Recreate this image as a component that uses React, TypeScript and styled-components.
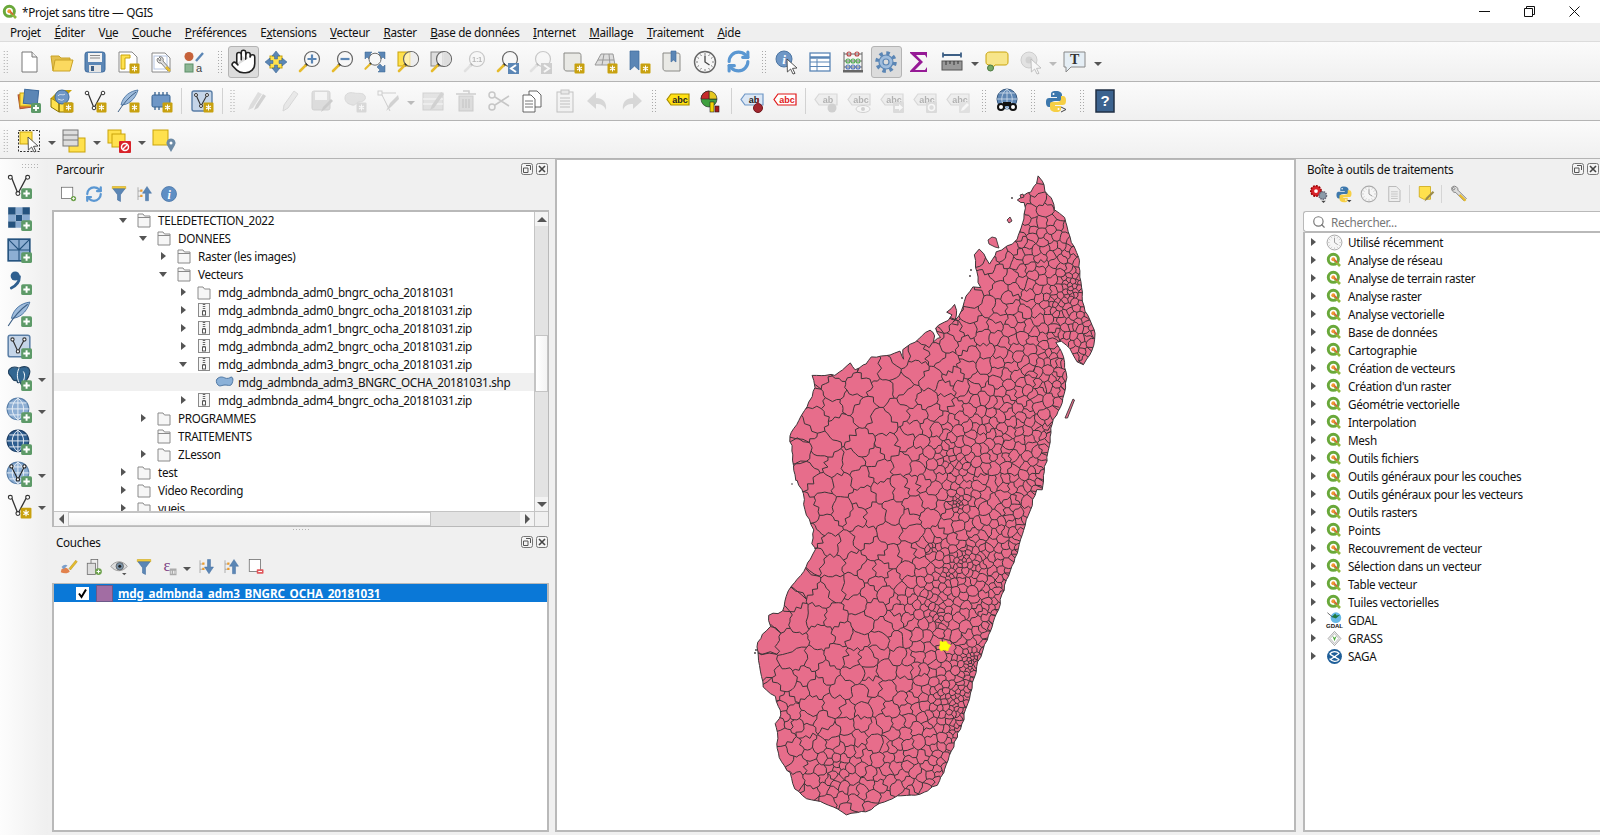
import React, { useMemo } from 'react';
import styled, { createGlobalStyle } from 'styled-components';
import { Hand, RefreshCw, Search } from 'lucide-react';

const GlobalStyle = createGlobalStyle`
  html, body {
    margin: 0;
    height: 100%;
    overflow: hidden;
    background: #f0f0f0;
    font-family: "Noto Sans", "Open Sans", sans-serif;
    font-size: 11.7px;
    color: #111;
  }
`;

/* ---------- shell ---------- */

const Page = styled.div`
  width: 1600px;
  height: 835px;
  display: flex;
  flex-direction: column;
  overflow: hidden;
  letter-spacing: -0.3px;
`;

const TitleBar = styled.div`
  height: 23px;
  background: #fff;
  display: flex;
  align-items: center;
  padding: 0 3px 0 2px;
`;

const TitleText = styled.span`
  margin-left: 4px;
  flex: 1;
`;

const WinButton = styled.div`
  width: 45px;
  height: 23px;
  display: flex;
  align-items: center;
  justify-content: center;
`;

const MenuBar = styled.div`
  height: 19px;
  background: #efefef;
  border-bottom: 1px solid #dcdcdc;
  display: flex;
  align-items: center;
  gap: 13.6px;
  padding-left: 10px;
  box-sizing: border-box;
`;

const MenuItem = styled.span``;

const ToolRow = styled.div<{ $h: number; $top?: number }>`
  height: ${p => p.$h}px;
  box-sizing: border-box;
  display: flex;
  align-items: center;
  padding-top: ${p => p.$top ?? 0}px;
  background: linear-gradient(#fbfbfb, #f0f0f0);
  border-bottom: 1px solid #b4b4b4;
`;

const Grip = styled.div<{ $w?: number }>`
  width: ${p => p.$w ?? 16}px;
  height: 24px;
  flex: none;
  background-image: radial-gradient(#a9a9a9 0.7px, transparent 0.8px);
  background-size: 3px 3px;
  background-repeat: repeat;
  background-clip: content-box;
  box-sizing: border-box;
  padding: 0 ${p => ((p.$w ?? 16) - 6) / 2}px;
`;

const Sep = styled.div`
  width: 8px;
  height: 26px;
  flex: none;
  position: relative;
  &::after {
    content: '';
    position: absolute;
    left: 3px;
    top: 0;
    bottom: 0;
    width: 1px;
    background: #d2d2d2;
  }
`;

const ToolButton = styled.div<{ $on?: boolean; $off?: boolean }>`
  width: 33px;
  height: 32px;
  flex: none;
  display: flex;
  align-items: center;
  justify-content: center;
  box-sizing: border-box;
  border-radius: 3px;
  ${p => p.$on && 'background: #dcdcdc; border: 1px solid #b4b4b4; width: 31px; margin: 0 1px;'}
  ${p => p.$off && 'filter: grayscale(1); opacity: 0.32;'}
`;

const DropArrow = styled.div<{ $w?: number; $off?: boolean }>`
  width: ${p => p.$w ?? 12}px;
  flex: none;
  height: 0;
  display: flex;
  justify-content: center;
  &::after {
    content: '';
    border-left: 4px solid transparent;
    border-right: 4px solid transparent;
    border-top: 4px solid ${p => (p.$off ? '#bbb' : '#555')};
  }
`;

const Body = styled.div`
  flex: 1;
  min-height: 0;
  display: flex;
`;

/* ---------- left icon strip ---------- */

const SideBar = styled.div`
  width: 48px;
  flex: none;
  display: flex;
  flex-direction: column;
  align-items: flex-start;
  background: linear-gradient(90deg, #fdfdfd, #efefef);
  padding: 4px 0 0 6px;
  box-sizing: border-box;
`;

const SideGrip = styled.div`
  width: 18px;
  height: 5px;
  margin: 0 0 2px 15px;
  background-image: radial-gradient(#b3b3b3 0.7px, transparent 0.8px);
  background-size: 3px 3px;
`;

const SideItem = styled.div`
  height: 32px;
  display: flex;
  align-items: center;
  gap: 5px;
`;

/* ---------- docks ---------- */

const LeftDock = styled.div`
  width: 507px;
  flex: none;
  padding: 0 6px 3px 4px;
  box-sizing: border-box;
  display: flex;
  flex-direction: column;
`;

const RightDock = styled.div`
  flex: 1;
  min-width: 0;
  padding: 0 0 3px 7px;
  display: flex;
  flex-direction: column;
`;

const Panel = styled.section<{ $h?: number }>`
  display: flex;
  flex-direction: column;
  min-height: 0;
  ${p => (p.$h ? `height: ${p.$h}px; flex: none;` : 'flex: 1;')}
`;

const PanelHead = styled.header`
  height: 22px;
  box-sizing: border-box;
  display: flex;
  align-items: center;
  padding: 0 1px 2px 4px;
  flex: none;
`;

const PanelTitle = styled.span`
  flex: 1;
`;

const DockButton = styled.svg`
  width: 12px;
  height: 12px;
  margin-left: 3px;
  display: block;
`;

const PanelBar = styled.div<{ $pad?: number }>`
  height: 26px;
  flex: none;
  display: flex;
  align-items: center;
  padding-left: ${p => p.$pad ?? 4}px;
  margin-bottom: 3px;
`;

const PanelTool = styled.div`
  width: 25px;
  flex: none;
  display: flex;
  justify-content: center;
`;

const PanelSep = styled.div`
  width: 7px;
  height: 18px;
  flex: none;
  position: relative;
  &::after {
    content: '';
    position: absolute;
    left: 3px;
    top: 0;
    bottom: 0;
    width: 1px;
    background: #d5d5d5;
  }
`;

const Splitter = styled.div`
  height: 5px;
  flex: none;
  display: flex;
  justify-content: center;
  align-items: center;
  &::after {
    content: '';
    width: 18px;
    height: 3px;
    background-image: radial-gradient(#b3b3b3 0.7px, transparent 0.8px);
    background-size: 3px 3px;
  }
`;

const TreeBox = styled.div`
  flex: 1;
  min-height: 0;
  display: grid;
  grid-template-columns: 1fr 14px;
  grid-template-rows: 1fr 15px;
  background: #fff;
  border: 2px solid #b9b9b9;
  border-right-width: 1px;
  border-bottom-width: 1px;
  overflow: hidden;
`;

const TreeList = styled.div`
  overflow: hidden;
  min-height: 0;
  padding-bottom: 1px;
  & > :first-child {
    margin-top: -1px;
  }
`;

const PlainBox = styled.div<{ $open?: boolean }>`
  flex: 1;
  min-height: 0;
  background: #fff;
  border: 2px solid #b9b9b9;
  border-top-width: 1px;
  overflow: hidden;
  ${p => p.$open && 'border-right-width: 0;'}
`;

const Row = styled.div<{ $pad: number; $hi?: boolean }>`
  height: 18px;
  display: flex;
  align-items: center;
  padding-left: ${p => p.$pad}px;
  white-space: nowrap;
  ${p => p.$hi && 'background: #f0f0f0;'}
`;

const Twist = styled.span<{ $state?: 'open' | 'closed' }>`
  width: 12px;
  margin-right: 7px;
  flex: none;
  display: flex;
  justify-content: center;
  &::after {
    content: '';
    ${p =>
      p.$state === 'open' &&
      'border-left: 4.5px solid transparent; border-right: 4.5px solid transparent; border-top: 5px solid #555;'}
    ${p =>
      p.$state === 'closed' &&
      'border-top: 4.5px solid transparent; border-bottom: 4.5px solid transparent; border-left: 5px solid #555;'}
  }
`;

const RowIcon = styled.span`
  width: 16px;
  height: 16px;
  margin-right: 6px;
  flex: none;
  display: flex;
  align-items: center;
  justify-content: center;
`;

const LayerRow = styled.div`
  height: 18px;
  background: #0a78d7;
  display: flex;
  align-items: center;
  padding-left: 22px;
  color: #fff;
  font-weight: 700;
  letter-spacing: -0.1px;
  text-decoration: underline;
`;

const LayerCheck = styled.span`
  width: 13px;
  height: 13px;
  background: #fff;
  color: #000;
  display: flex;
  align-items: center;
  justify-content: center;
  margin-right: 7px;
`;

const LayerSwatch = styled.span`
  width: 15px;
  height: 15px;
  background: #a26da3;
  border: 1px solid #6a5a8a;
  margin-right: 5px;
`;

/* ---------- scrollbars ---------- */

const VBar = styled.div`
  display: flex;
  flex-direction: column;
  border-left: 1px solid #c4c4c4;
  background: #e3e3e3;
  min-height: 0;
`;

const HBar = styled.div`
  display: flex;
  background: #e3e3e3;
  border-top: 1px solid #c4c4c4;
`;

const ScrollBtn = styled.div<{ $size: number; $horizontal?: boolean }>`
  flex: none;
  ${p => (p.$horizontal ? 'width' : 'height')}: ${p => p.$size}px;
  background: #f3f3f3;
  display: flex;
  align-items: center;
  justify-content: center;
`;

const ScrollSpace = styled.div<{ $size?: number; $thumb?: boolean; $horizontal?: boolean }>`
  ${p => (p.$size ? `flex: none; ${p.$horizontal ? 'width' : 'height'}: ${p.$size}px;` : 'flex: 1;')}
  ${p =>
    p.$thumb &&
    `background: linear-gradient(${p.$horizontal ? '180deg' : '90deg'}, #fff, #f4f4f4);
     border: 1px solid #c4c4c4;
     box-sizing: border-box;`}
`;

const Corner = styled.div`
  background: #f0f0f0;
  border-top: 1px solid #c4c4c4;
  border-left: 1px solid #c4c4c4;
`;

const MiniArrow = styled.span<{ $dir: 'up' | 'down' | 'left' | 'right' }>`
  width: 0;
  height: 0;
  ${p => p.$dir === 'up' && 'border-left: 5px solid transparent; border-right: 5px solid transparent; border-bottom: 5px solid #555;'}
  ${p => p.$dir === 'down' && 'border-left: 5px solid transparent; border-right: 5px solid transparent; border-top: 5px solid #555;'}
  ${p => p.$dir === 'left' && 'border-top: 5px solid transparent; border-bottom: 5px solid transparent; border-right: 5px solid #555;'}
  ${p => p.$dir === 'right' && 'border-top: 5px solid transparent; border-bottom: 5px solid transparent; border-left: 5px solid #555;'}
`;

/* ---------- canvas & search ---------- */

const Canvas = styled.main`
  width: 741px;
  flex: none;
  background: #fff;
  border: 2px solid #b9b9b9;
  border-top-width: 1px;
  box-sizing: border-box;
  margin-bottom: 3px;
  overflow: hidden;
`;

const MapSvg = styled.svg`
  display: block;
`;

const SearchBox = styled.div`
  height: 21px;
  margin-top: 1px;
  flex: none;
  background: #fff;
  border: 1px solid #b9b9b9;
  border-right: none;
  border-radius: 3px 0 0 3px;
  box-sizing: border-box;
  display: flex;
  align-items: center;
  padding-left: 8px;
  gap: 5px;
  color: #777;
`;

/* ---------- icons ---------- */

const B = '#5b86b5';
const BL = '#9fbcdc';
const Y = '#ffe14d';
const YB = '#c9a30a';

const Star = () => (
  <g>
    <rect x="13.5" y="13.5" width="10" height="10" rx="1" fill="#c8a10f" />
    <path d="M18.5 15.500v6M16 17l5 3M21 17l-5 3" stroke="#fff" strokeWidth="1.1" />
  </g>
);

const PlusBadge = () => (
  <g>
    <rect x="14" y="14" width="10" height="10" rx="1.5" fill="#5d9a68" />
    <path d="M19 16v6M16 19h6" stroke="#fff" strokeWidth="1.8" />
  </g>
);

const Vee = () => (
  <g>
    <path d="M5 4l6 15 8-15" fill="none" stroke="#333" strokeWidth="1.2" />
    <circle cx="4" cy="4" r="1.8" fill="#fff" stroke="#333" />
    <circle cx="11" cy="19" r="1.8" fill="#fff" stroke="#333" />
    <circle cx="20" cy="4" r="1.8" fill="#fff" stroke="#333" />
  </g>
);

const Feather = () => (
  <g>
    <path d="M22 1C14 2 7 7 5 16c7 0 14-5 17-15z" fill={BL} stroke="#4d76a3" strokeWidth="0.9" />
    <path d="M2 23C7 15 13 8 20 3" fill="none" stroke="#3d5f85" strokeWidth="1" />
  </g>
);

const VirtualBox = () => (
  <g>
    <rect x="2" y="2" width="20" height="20" rx="2" fill="#c5d5e8" stroke="#5a7ea6" strokeWidth="1.4" />
    <path d="M6 6l5 11 6-11" fill="none" stroke="#333" strokeWidth="1.1" />
    <circle cx="6" cy="6" r="1.5" fill="#fff" stroke="#333" />
    <circle cx="11" cy="17" r="1.5" fill="#fff" stroke="#333" />
    <circle cx="17" cy="6" r="1.5" fill="#fff" stroke="#333" />
  </g>
);

const Globe = ({ dark }: { dark?: boolean }) => (
  <g>
    <circle cx="11" cy="11" r="10" fill={dark ? '#2d5d8f' : '#8daed3'} stroke={dark ? '#1d3f66' : '#5a80aa'} />
    <path d="M1 11h20M11 1v20M3 5.500h16M3 16.500h16M11 1c-7 5-7 15 0 20M11 1c7 5 7 15 0 20" fill="none" stroke={dark ? '#e8eef5' : '#e6eef6'} strokeWidth="0.9" />
  </g>
);

const Loupe = ({ children }: { children?: React.ReactNode }) => (
  <g>
    <circle cx="15" cy="9" r="7.5" fill="#f7f7f7" stroke="#666" strokeWidth="1.2" />
    {children}
    <path d="M10 14l-1.6 1.6" stroke="#222" strokeWidth="2.6" />
    <path d="M8.4 15.6L3 21" stroke="#e6bb2c" strokeWidth="2.6" strokeLinecap="round" />
  </g>
);

const Cursor = ({ dx = 0, dy = 0 }: { dx?: number; dy?: number }) => (
  <path transform={`translate(${dx} ${dy})`} d="M12 9l10 9-4.500.4 2.500 5-2 .6-2.400-5-3.200 3z" fill="#fff" stroke="#444" strokeWidth="0.9" />
);

const Scroll = () => <path d="M3 3h15c2 0 2 2 2 4v14H6c-2 0-3-1-3-3z" fill="#e9e9e5" stroke="#8a8a86" />;

const Bookmark = ({ x = 6 }: { x?: number }) => <path transform={`translate(${x} 1)`} d="M0 0h9v19l-4.500-4L0 19z" fill={B} stroke="#3d6a9c" strokeWidth="0.7" />;

const LabelTag = ({ fill, stroke, color = '#222', text = 'abc' }: { fill: string; stroke: string; color?: string; text?: string }) => (
  <g>
    <path d="M5 5h18v11H5l-4-5.500z" fill={fill} stroke={stroke} strokeWidth="1.2" />
    <text x="14" y="14" fontFamily="Liberation Sans" fontWeight="700" fontSize="9" textAnchor="middle" letterSpacing="0" fill={color}>{text}</text>
  </g>
);

const Funnel = () => (
  <g>
    <path d="M3 2h18v3H3z" fill="#f1c93a" stroke="#c9a30a" strokeWidth="0.7" />
    <path d="M4 5h16l-6 8v9l-4-2v-7z" fill={B} stroke="#3d6a9c" strokeWidth="0.7" />
  </g>
);

const MiniTree = ({ down }: { down?: boolean }) => (
  <g>
    <path d="M4 3v17M4 8h4M4 15h4" stroke="#999" fill="none" />
    <rect x="7" y="6" width="3" height="3" fill="#eb9b2d" />
    <rect x="7" y="13" width="3" height="3" fill="#eb9b2d" />
    <path d={down ? 'M14 2h4v10h4l-6 9-6-9h4z' : 'M14 21h4V11h4l-6-9-6 9h4z'} fill={B} stroke="#3d6a9c" strokeWidth="0.6" />
  </g>
);

const Python = () => (
  <g>
    <path d="M12 2C7 2 7 4 7 6v2h6v1H5C2 9 2 12 2 14s1 4 3 4h2v-3c0-2 2-3 4-3h5c2 0 2-1 2-3V6c0-2-2-4-6-4z" fill="#3d78ad" />
    <path d="M12 23c5 0 5-2 5-4v-2h-6v-1h8c3 0 3-3 3-5s-1-4-3-4h-2v3c0 2-2 3-4 3H8c-2 0-2 1-2 3v3c0 2 2 4 6 4z" fill="#f6cf45" />
    <circle cx="9.500" cy="5" r="1" fill="#fff" />
    <circle cx="14.500" cy="20" r="1" fill="#fff" />
  </g>
);

const QLogo = () => (
  <g>
    <circle cx="11" cy="11" r="7.6" fill="#fff" stroke="#69a83a" strokeWidth="4.4" />
    <path d="M13 13l8 8" stroke="#8fb93c" strokeWidth="4" />
    <circle cx="11" cy="11" r="3" fill="#ee9b33" />
    <path d="M12 11l5 5" stroke="#e8463a" strokeWidth="1.6" />
  </g>
);

const ClockFace = ({ ring, hand }: { ring: string; hand: string }) => (
  <g>
    <circle cx="12" cy="12" r="10.500" fill="#f6f6f6" stroke={ring} strokeWidth="1.400" />
    <path d="M12 3v2M12 19v2M3 12h2M19 12h2M7.500 4.500l1 1.500M16.500 4.500l-1 1.500M4.500 7.500l1.500 1M4.500 16.500l1.500-1M19.500 7.500l-1.500 1M19.500 16.500l-1.500-1M7.500 19.500l1-1.500M16.500 19.500l-1-1.500" stroke={ring} strokeWidth="0.800" />
    <path d="M12 5.500V12l4.500 3" fill="none" stroke={hand} strokeWidth="1.300" />
  </g>
);

const page = 'M5 2h10l5 5v15H5z';

const ICONS: Record<string, React.ReactNode> = {
  qgis: <QLogo />,
  new: <g><path d={page} fill="#fff" stroke="#777" /><path d="M15 2v5h5" fill="#eee" stroke="#777" /></g>,
  open: <g><path d="M3 21L1 6h8l2 2h9v3" fill="#e4c04e" stroke="#c9a227" /><path d="M3 21l2-11h18l-3 11z" fill="#fbd95f" stroke="#c9a227" /></g>,
  save: <g><rect x="2" y="2" width="20" height="20" rx="2.500" fill="#5b86b5" stroke="#3d6a9c" /><rect x="5" y="3" width="14" height="9" fill="#f2f2f2" /><path d="M7 5.500h10M7 8h10" stroke="#888" /><rect x="6" y="15" width="12" height="7" fill="#e4e4e4" /><rect x="8" y="16" width="3" height="5" fill="#3d5f85" /></g>,
  saveas: <g><path d="M3 2h13l5 5v15H3z" fill="#fff" stroke="#888" /><path d="M5 5h9v3H9v11H5z" fill={Y} stroke={YB} /><Star /></g>,
  layouts: <g><path d="M3 3h13l5 5v14H3z" fill="#fff" stroke="#888" /><rect x="5" y="6" width="13" height="13" fill="#fff" stroke="#b6c6e4" /><path d="M9 8a3 3 0 0 0 3 5l7 8 2-2-7-8a3 3 0 0 0-4-4l2 2-1 2z" fill="#ddd" stroke="#666" strokeWidth="0.8" /><path d="M17 17l4 4" stroke="#e6bb2c" strokeWidth="2.500" /></g>,
  style: <g><circle cx="7" cy="6.500" r="4.500" fill="#c6623a" /><rect x="3" y="14" width="8" height="8" fill="#8cb694" stroke="#5c8f68" /><path d="M14 11l7-8" stroke={B} strokeWidth="2.400" /><text x="14" y="22" fontFamily="Liberation Sans" fontSize="11" fill="#444">a</text></g>,
  pan: <g><rect x="6" y="6" width="12" height="12" fill={Y} stroke={YB} /><path d="M12 1l4 5h-2.500v3h-3V6H8zM12 23l-4-5h2.500v-3h3v3H16zM1 12l5-4v2.500h3v3H6V16zM23 12l-5 4v-2.500h-3v-3h3V8z" fill={B} stroke="#34608f" strokeWidth="0.5" /></g>,
  zoomin: <Loupe><path d="M15 4.500v9M10.500 9h9" stroke={B} strokeWidth="2.200" /></Loupe>,
  zoomout: <Loupe><path d="M10.500 9h9" stroke={B} strokeWidth="2.200" /></Loupe>,
  zoomfull: <g><path d="M2 2h7L7 4l3 3-3 3-3-3-2 2zM22 2v7l-2-2-3 3-3-3 3-3-2-2zM22 22h-7l2-2-3-3 3-3 3 3 2-2z" fill={B} stroke="#34608f" strokeWidth="0.5" /><g transform="translate(0 2) scale(0.8)"><Loupe /></g></g>,
  zoomsel: <g><rect x="2" y="2" width="12" height="14" fill={Y} stroke={YB} /><circle cx="15" cy="9" r="7.500" fill="#fff" fillOpacity="0.55" stroke="#666" strokeWidth="1.200" /><path d="M15 2v14a7 7 0 0 0 0-14z" fill="#eee" /><path d="M10 14l-1.600 1.600" stroke="#222" strokeWidth="2.600" /><path d="M8.400 15.600L3 21" stroke="#e6bb2c" strokeWidth="2.600" strokeLinecap="round" /></g>,
  zoomlayer: <g><rect x="2" y="2" width="12" height="14" fill="#ddd" stroke="#888" /><circle cx="15" cy="9" r="7.500" fill="#fff" fillOpacity="0.55" stroke="#666" strokeWidth="1.200" /><path d="M15 2v14a7 7 0 0 0 0-14z" fill="#ddd" /><path d="M10 14l-1.600 1.600" stroke="#222" strokeWidth="2.600" /><path d="M8.400 15.600L3 21" stroke="#e6bb2c" strokeWidth="2.600" strokeLinecap="round" /></g>,
  one: <Loupe><text x="15" y="12" fontFamily="Liberation Sans" fontWeight="700" fontSize="7.500" textAnchor="middle" fill="#333">1:1</text></Loupe>,
  last: <g><Loupe /><rect x="13" y="13" width="11" height="11" fill={B} /><path d="M21 15l-5 3.500 5 3.500" fill="none" stroke="#fff" strokeWidth="2" /></g>,
  next: <g><Loupe /><rect x="13" y="13" width="11" height="11" fill={B} /><path d="M16 15l5 3.500-5 3.500" fill="none" stroke="#fff" strokeWidth="2" /></g>,
  newmap: <g><Scroll /><Star /></g>,
  new3d: <g><path d="M1 15L7 4h12l2 11z" fill="#ddd" stroke="#999" /><path d="M4 10h16M10 4l-2 11M15 4l1 11" stroke="#999" /><Star /></g>,
  newmark: <g><Bookmark x={3} /><Star /></g>,
  marks: <g><Scroll /><path d="M11 1h5v11l-2.500-2-2.500 2z" fill={B} stroke="#3d6a9c" strokeWidth="0.6" /></g>,
  clock: <ClockFace ring="#666" hand="#444" />,
  clockLight: <ClockFace ring="#aaa" hand="#999" />,
  gear: <g><circle cx="12" cy="12" r="8.500" fill="none" stroke={B} strokeWidth="4.500" strokeDasharray="3.300 3.380" /><circle cx="12" cy="12" r="7" fill={BL} stroke={B} strokeWidth="1.200" /><circle cx="12" cy="12" r="3" fill="#dcdcdc" stroke={B} strokeWidth="1.200" /></g>,
  identify: <g><circle cx="9" cy="9" r="8" fill="#6f97c6" stroke="#4d76a3" /><text x="9" y="14" fontFamily="Liberation Serif" fontWeight="700" fontStyle="italic" fontSize="13" textAnchor="middle" fill="#fff">i</text><Cursor /></g>,
  table: <g><rect x="2" y="3" width="20" height="18" fill="#fff" stroke={B} strokeWidth="1.300" /><path d="M2 7.500h20" stroke={B} strokeWidth="2.500" /><path d="M9 9v12M2 12h20M2 16.500h20" stroke={B} /></g>,
  abacus: <g><path d="M3 2v18M21 2v18M3 4h18M3 11h18M3 17h18" stroke="#666" fill="none" /><rect x="2" y="20" width="20" height="2.500" fill="#666" /><g fill="none" strokeWidth="1.100"><circle cx="8" cy="4" r="2" stroke="#b44" /><circle cx="16" cy="4" r="2" stroke="#b44" /><circle cx="7" cy="11" r="2" stroke="#5a5" /><circle cx="12" cy="11" r="2" stroke="#5a5" /><circle cx="17" cy="11" r="2" stroke="#5a5" /><circle cx="7" cy="17" r="2" stroke="#57b" /><circle cx="12" cy="17" r="2" stroke="#57b" /><circle cx="17" cy="17" r="2" stroke="#57b" /></g></g>,
  sigma: <path d="M3 2h17v6l-2-3H9l7 7-8 8h10l2-3v5H3v-1l9-9.500L3 3z" fill="#961a96" />,
  measure: <g><path d="M3 5h18M3 2.500v5M21 2.500v5" stroke="#3d5f85" strokeWidth="1.800" fill="none" /><rect x="2" y="11" width="20" height="9" fill="#999" stroke="#555" /><path d="M6 11v4M10 11v3M14 11v4M18 11v3" stroke="#333" /></g>,
  tip: <g><path d="M5 2h15c2 0 3 1 3 3v7c0 2-1 3-3 3H10l-5 6v-6c-3 0-4-1-4-3V5c0-2 2-3 4-3z" fill="#f7e58a" stroke="#c9a30a" /><circle cx="5.500" cy="18" r="3" fill="#76a866" stroke="#4c7a42" /></g>,
  action: <g><circle cx="11" cy="10" r="8" fill="#bbb" stroke="#777" /><circle cx="11" cy="10" r="3.500" fill="#888" /><Cursor dx={1} /></g>,
  annot: <g><path d="M1 2h21v15H8l-5 5v-5H1z" fill="#e5eef5" stroke="#888" /><text x="11.500" y="14" fontFamily="Liberation Serif" fontWeight="700" fontSize="14" textAnchor="middle" fill="#333">T</text></g>,
  dsm: <g><rect x="2" y="5" width="12" height="14" fill="#e16d3c" stroke="#a8502b" transform="rotate(-8 8 12)" /><rect x="3" y="4" width="12" height="13" fill={Y} stroke={YB} /><rect x="7" y="1" width="14" height="14" fill={B} stroke="#3d6a9c" transform="rotate(6 14 8)" /><PlusBadge /></g>,
  gpkg: <g><path d="M1 9l8 5v9l-8-5zM9 14h13v9H9z" fill={Y} stroke="#8a7300" /><path d="M1 9l8-8h13L9 14z" fill="#c9a30a" /><circle cx="12" cy="8" r="7" fill="#6f97c6" stroke="#3d6a9c" /><path d="M8 7c2-3 5 0 7-2M8 10c3 1 4 2 6 0" stroke="#dde8f2" fill="none" /><Star /></g>,
  shape: <g><Vee /><Star /></g>,
  scratch: <g><Feather /><Star /></g>,
  mesh: <g><rect x="3" y="6" width="18" height="12" rx="1.500" fill="#6f97c6" stroke="#34608f" /><path d="M6 3v3M10 3v3M14 3v3M18 3v3M6 18v3M10 18v3" stroke="#34608f" strokeWidth="1.300" /><Star /></g>,
  virtual: <g><VirtualBox /><Star /></g>,
  editmany: <g><path d="M4 21l2-5 8-13 4 2-9 14z" fill="#aaa" /><path d="M10 21l2-5 7-11 3 2-8 12z" fill="#888" /></g>,
  pencil: <path d="M6 22l1-6L17 2l4 3-10 14z" fill="#ccc" stroke="#999" />,
  saveedit: <g><rect x="2" y="2" width="18" height="19" rx="2" fill="#aaa" stroke="#888" /><rect x="5" y="3" width="12" height="8" fill="#eee" /><path d="M11 23l2-5 8-8 2 2-8 8z" fill="#777" /></g>,
  addpoly: <g><path d="M2 9c0-5 5-6 9-5s9-1 11 3-3 6-6 6-3 4-7 3-7-3-7-7z" fill="#bbb" stroke="#999" /><Star /></g>,
  digitize: <g><rect x="2" y="2" width="4" height="4" fill="none" stroke="#777" /><path d="M6 6l8 16M6 4h14" stroke="#777" /><path d="M10 22l4-8 8-8 1 4-8 8z" fill="#888" /></g>,
  edittable: <g><rect x="2" y="4" width="20" height="17" fill="#bbb" stroke="#888" /><path d="M2 10h20M2 15h20" stroke="#fff" /><path d="M9 21l2-5 9-13 3 2-10 14z" fill="#888" /></g>,
  trash: <g><rect x="5" y="7" width="14" height="15" fill="#aaa" stroke="#777" /><path d="M2 5h20M9 2h6v3M9 10v9M12 10v9M15 10v9" stroke="#777" fill="none" strokeWidth="1.500" /></g>,
  scissors: <g><circle cx="5" cy="6" r="3" fill="none" stroke="#666" strokeWidth="1.500" /><circle cx="5" cy="18" r="3" fill="none" stroke="#666" strokeWidth="1.500" /><path d="M8 8l14 9M8 16l14-9" stroke="#666" strokeWidth="1.500" /></g>,
  copy: <g><path d="M9 2h8l4 4v12H9z" fill="#fff" stroke="#555" strokeWidth="0.9" /><path d="M3 6h8l4 4v13H3z" fill="#fff" stroke="#555" strokeWidth="0.9" /><path d="M5 12h8M5 15h8M5 18h8" stroke="#666" strokeWidth="0.9" /></g>,
  paste: <g><rect x="4" y="3" width="16" height="20" fill="#eee" stroke="#555" /><rect x="8" y="1" width="8" height="4" fill="#ccc" stroke="#555" /><path d="M7 9h10M7 12h10M7 15h10M7 18h10" stroke="#555" /></g>,
  undo: <path d="M10 3L1 12l9 8v-5c5 0 8 1 10 6 1-7-2-12-10-12z" fill="#999" />,
  redo: <path d="M14 3l9 9-9 8v-5c-5 0-8 1-10 6-1-7 2-12 10-12z" fill="#999" />,
  labelY: <LabelTag fill="#ffe014" stroke="#a98d00" />,
  chart: <g><path d="M10 2a8 8 0 1 0 8 8h-8z" fill="#3fa03f" stroke="#222" strokeWidth="0.600" /><path d="M10 2a8 8 0 0 1 8 8h-8z" fill="#e6c81e" stroke="#222" strokeWidth="0.600" /><path d="M2 10a8 8 0 0 1 8-8v8z" fill="#c62a2a" stroke="#222" strokeWidth="0.600" /><rect x="11" y="13" width="4" height="10" fill="#f2d500" stroke="#222" strokeWidth="0.600" /><rect x="16" y="17" width="4" height="6" fill="#a91a1a" stroke="#222" strokeWidth="0.600" /></g>,
  labelPin: <g><LabelTag fill="#dbe7f5" stroke="#6f97c6" text="ab" /><circle cx="18" cy="19" r="4.500" fill="#a3272f" stroke="#70181d" /><path d="M18 9v6" stroke="#a3272f" strokeWidth="1.500" /></g>,
  labelR: <LabelTag fill="#fff" stroke="#e01818" color="#e01818" />,
  ghost1: <g><LabelTag fill="#ddd" stroke="#999" text="ab" /><circle cx="18" cy="19" r="4.500" fill="#888" /></g>,
  ghost2: <g><LabelTag fill="#ddd" stroke="#999" /><ellipse cx="16" cy="20" rx="7" ry="3.500" fill="#fff" stroke="#888" /><circle cx="16" cy="20" r="2" fill="#888" /></g>,
  ghost3: <g><LabelTag fill="#ddd" stroke="#999" /><rect x="13" y="13" width="11" height="11" rx="1" fill="#aaa" /><path d="M15 17h4v-2l4 3.500-4 3.500v-2h-4z" fill="#fff" /></g>,
  ghost4: <g><LabelTag fill="#ddd" stroke="#999" /><rect x="13" y="13" width="11" height="11" rx="1" fill="#aaa" /><circle cx="18.500" cy="18.500" r="3" fill="none" stroke="#fff" strokeWidth="1.500" /></g>,
  ghost5: <g><LabelTag fill="#ddd" stroke="#999" /><rect x="13" y="13" width="11" height="11" rx="1" fill="#bbb" /><path d="M15 22l1-3 5-5 2 2-5 5z" fill="#fff" /></g>,
  binoc: <g><circle cx="12" cy="10" r="10" fill="#5e86b3" stroke="#35587f" /><path d="M2 10h20M12 0v20M4 4h16M4 16h16M12 0c-7 5-7 15 0 20M12 0c7 5 7 15 0 20" fill="none" stroke="#d5e1ee" strokeWidth="0.800" /><circle cx="6" cy="18" r="4" fill="#111" /><circle cx="18" cy="18" r="4" fill="#111" /><circle cx="6" cy="18" r="2" fill="#fff" /><circle cx="18" cy="18" r="2" fill="#fff" /><rect x="8" y="13" width="8" height="4" fill="#111" /></g>,
  python: <g><Python /><path d="M17 18l5 2.500-5 2.500" fill="none" stroke="#444" /></g>,
  help: <g><rect x="3" y="1" width="18" height="22" fill="#3c638f" stroke="#1f2f44" strokeWidth="1.500" /><text x="12" y="17" fontFamily="Liberation Sans" fontWeight="700" fontSize="15" textAnchor="middle" fill="#fff">?</text></g>,
  select: <g><rect x="1.500" y="1.500" width="21" height="21" fill="none" stroke="#333" strokeDasharray="2 1.500" /><rect x="3" y="3" width="12" height="12" fill={Y} stroke={YB} /><Cursor dx={-1} dy={-1} /></g>,
  attrsel: <g><rect x="7" y="9" width="16" height="14" fill={Y} stroke={YB} /><rect x="1" y="1" width="15" height="16" fill="#ddd" stroke="#777" /><path d="M1 6h15M1 11h15" stroke="#777" /></g>,
  unsel: <g><rect x="1" y="1" width="13" height="13" fill={Y} stroke={YB} /><rect x="5" y="5" width="13" height="13" fill={Y} stroke={YB} /><rect x="12" y="12" width="12" height="12" rx="1" fill="#d8232a" /><circle cx="18" cy="18" r="3.500" fill="none" stroke="#fff" strokeWidth="1.500" /><path d="M15.500 20.500l5-5" stroke="#fff" strokeWidth="1.500" /></g>,
  selloc: <g><rect x="1" y="1" width="15" height="15" fill={Y} stroke={YB} /><path d="M19 23l-4-7a4.500 4.500 0 1 1 8 0z" fill="#6c8aa5" /><circle cx="19" cy="14" r="1.500" fill="#fff" /></g>,
  vadd: <g><Vee /><PlusBadge /></g>,
  raster: <g><path d="M2 2h7v7H2zM15 2h7v7h-7zM9 9h6v6H9zM2 15h7v6H2z" fill="#24527e" /><path d="M9 2h6v7H9zM2 9h7v6H2zM15 9h7v6h-7zM9 15h6v6H9z" fill="#88aad0" /><PlusBadge /></g>,
  meshadd: <g><rect x="2" y="2" width="20" height="20" fill="#8daed3" stroke="#24527e" strokeWidth="1.500" /><path d="M2 12h20M12 2v20M2 2l10 10M12 12l10-10" stroke="#24527e" /><PlusBadge /></g>,
  comma: <g><circle cx="8.500" cy="6.500" r="4.200" fill="#2f5f8f" /><path d="M12.400 7c0 5-3 8.500-7.500 10.500" fill="none" stroke="#2f5f8f" strokeWidth="2.600" strokeLinecap="round" /><PlusBadge /></g>,
  featheradd: <g><Feather /><PlusBadge /></g>,
  virtualadd: <g><VirtualBox /><PlusBadge /></g>,
  pg: <g><path d="M3 4c3-3 7-2 9-1 3-2 7-2 9 0 2 3 0 8-2 11-1 2-1 5-3 6-2 0-2-3-3-4-2 1-3 0-3-2-2 1-4 0-5-3C3 9 1 7 3 4z" fill="#336791" stroke="#1f3f5c" /><path d="M12 3c-2 4-2 9 0 13M16 6c2 3 1 6 0 9" stroke="#fff" strokeWidth="0.900" fill="none" /><PlusBadge /></g>,
  wms: <g><Globe /><PlusBadge /></g>,
  wcs: <g><Globe dark /><PlusBadge /></g>,
  wfs: <g><Globe /><path d="M5 5l6 12 6-12" stroke="#222" fill="none" /><circle cx="5" cy="5" r="1.500" fill="#fff" stroke="#222" /><circle cx="11" cy="17" r="1.500" fill="#fff" stroke="#222" /><circle cx="17" cy="5" r="1.500" fill="#fff" stroke="#222" /><PlusBadge /></g>,
  vstar: <g><Vee /><Star /></g>,
  selfeat: <g><rect x="2" y="3" width="15" height="15" fill="#fff" stroke="#666" /><circle cx="18" cy="18" r="3.500" fill="#6fa34f" /><path d="M18 16v4M16 18h4" stroke="#fff" /></g>,
  filter: <Funnel />,
  collapse: <MiniTree />,
  expand: <MiniTree down />,
  info: <g><circle cx="12" cy="12" r="10" fill="#5f8fc4" stroke="#4470a3" /><text x="12" y="18" fontFamily="Liberation Serif" fontWeight="700" fontStyle="italic" fontSize="16" textAnchor="middle" fill="#fff">i</text></g>,
  brush: <g><path d="M12 14l9-11 2 2-9 11z" fill="#e6bb2c" stroke="#a8860a" strokeWidth="0.600" /><path d="M2 15c4-4 9-2 11 3-2 3-8 3-12 1z" fill="#e2824d" /><path d="M2 12c3-3 5-4 8-2l-5 5z" fill="#7ca0cb" /></g>,
  addgroup: <g><rect x="8" y="2" width="9" height="18" fill="#eee" stroke="#666" /><rect x="3" y="7" width="11" height="15" fill="#ddd" stroke="#666" /><circle cx="18" cy="18" r="4.500" fill="#6fa34f" /><path d="M18 15.500v5M15.500 18h5" stroke="#fff" strokeWidth="1.300" /></g>,
  eye: <g><path d="M1 11c6-8 16-8 22 0-6 8-16 8-22 0z" fill="#ddd" stroke="#888" /><circle cx="13" cy="11" r="5" fill="#7b93a8" stroke="#555" /><circle cx="13" cy="11" r="2" fill="#222" /><path d="M16 20l3 3 3-3z" fill="#555" /></g>,
  epsilon: <g><text x="9" y="17" fontFamily="Liberation Serif" fontSize="22" textAnchor="middle" fill="#7a3c82">ε</text><rect x="13" y="14" width="9" height="9" fill="#aaa" /><path d="M15 17v4M18 17v4M20 17v4" stroke="#fff" /></g>,
  removesel: <g><rect x="3" y="2" width="15" height="16" fill="#fff" stroke="#666" /><rect x="13" y="15" width="9" height="6" rx="1" fill="#e0555a" /><path d="M15 18h5" stroke="#fff" strokeWidth="1.500" /></g>,
  procalgo: <g><circle cx="8" cy="8" r="7" fill="#d8232a" stroke="#900" strokeDasharray="2.500 1.500" strokeWidth="2" /><circle cx="8" cy="8" r="2.500" fill="#fff" /><circle cx="17" cy="14" r="5" fill="#8b9aa8" stroke="#667" strokeDasharray="2 1" strokeWidth="2" /><path d="M15 21l3 3 3-3z" fill="#444" /></g>,
  procpy: <g><Python /><path d="M16 20l3 3 3-3z" fill="#444" /></g>,
  procdoc: <g><path d="M5 2h10l5 5v15H5z" fill="#eee" stroke="#aaa" /><path d="M8 9h9M8 12h9M8 15h9M8 18h9" stroke="#bbb" /></g>,
  procedit: <g><path d="M3 2h15v17H9l-6-3z" fill={Y} stroke={YB} /><path d="M10 22l2-5 9-9 2 2-9 9z" fill="#9a8a4a" /></g>,
  wrench: <g><path d="M4 3a5 5 0 0 0 5 7l11 11 3-3L12 7a5 5 0 0 0-7-5l3 3-2 2z" fill="#ddd" stroke="#666" /><path d="M14 13l8 8" stroke="#e6bb2c" strokeWidth="3" /></g>,
  gdal: <g><circle cx="14" cy="8" r="7.500" fill="#66b9e6" /><path d="M8 7l5-5 2 3 5-1-6 5z" fill="#1f7a3f" /><path d="M2 1l7 6" stroke="#333" /><text x="12" y="23" fontFamily="Liberation Sans" fontWeight="700" fontSize="8.500" textAnchor="middle" letterSpacing="0" fill="#111">GDAL</text></g>,
  grass: <g><path d="M12 2l9 10-9 10-9-10z" fill="#f3f3f3" stroke="#888" /><path d="M12 5l6 7-6 7-6-7z" fill="#fff" stroke="#aaa" /><path d="M9 8l3 8 3-8-3 3z" fill="#4ea83a" /></g>,
  saga: <g><circle cx="12" cy="12" r="10.500" fill="#1f5f99" /><path d="M5 9c3-5 10-5 14-1M5 15c4 5 10 5 14 1M6 9l12 7M7 16l11-8" stroke="#fff" strokeWidth="1.800" fill="none" /></g>,
  shp: <path d="M1 5c3-3 6-2 8-1s5 0 6-1c3 0 2 6 0 8-2 1-3 0-6 0s-5 2-7 0-2-5-1-6z" fill="#8bb1d8" stroke="#4d76a3" />,
  folder: <g><path d="M2 3h5l1.500 2H14v10H2z" fill="#f6f6f6" stroke="#8a8a8a" /></g>,
  folderOpen: <g><path d="M2 2h5l1.500 2H14v11H2z" fill="#f6f6f6" stroke="#8a8a8a" /><path d="M2 5.500h12" stroke="#8a8a8a" /></g>,
  zip: <g><rect x="2.500" y="1.500" width="11" height="13" fill="#f6f6f6" stroke="#8a8a8a" /><path d="M8 2v7" stroke="#666" strokeWidth="2.500" strokeDasharray="1 1" /><rect x="6.500" y="9" width="3" height="4" fill="#fff" stroke="#555" /></g>,
};

const IconSvg = styled.svg`
  display: block;
  flex: none;
  overflow: visible;
`;

const Glyph = ({ name, size = 24, box = 24 }: { name: string; size?: number; box?: number }) => (
  <IconSvg width={size} height={size} viewBox={`0 0 ${box} ${box}`}>
    {ICONS[name]}
  </IconSvg>
);

const toolIcon = (name: string) => {
  if (name === 'hand') return <Hand size={27} strokeWidth={1.4} color="#222" fill="#fff" />;
  if (name === 'refresh') return <RefreshCw size={25} strokeWidth={3} color="#5a97d2" />;
  return <Glyph name={name} />;
};

/* '|' grip (optional width after it), '/' separator, 'v' drop arrow, '~x' disabled, '!x' checked */
const ROW1 = ['|12.5', 'new', 'open', 'save', 'saveas', 'layouts', 'style', '|', '!hand', 'pan', 'zoomin', 'zoomout', 'zoomfull', 'zoomsel', 'zoomlayer', '~one', 'last', '~next', 'newmap', 'new3d', 'newmark', 'marks', 'clock', 'refresh', '|', 'identify', 'table', 'abacus', '!gear', 'sigma', 'measure', 'v', 'tip', '~action', '~v', 'annot', 'v'];
const ROW2 = ['|12.5', 'dsm', 'gpkg', 'shape', 'scratch', 'mesh', '/', 'virtual', '/', '|13', '~editmany', '~pencil', '~saveedit', '~addpoly', '~digitize', '~v', '~edittable', '~trash', '~scissors', 'copy', '~paste', '~undo', '~redo', '|14', 'labelY', 'chart', '/', 'labelPin', 'labelR', '/', '~ghost1', '~ghost2', '~ghost3', '~ghost4', '~ghost5', '|', 'binoc', '|', 'python', '|', 'help'];
const ROW3 = ['|12.5', 'select', 'v', 'attrsel', 'v', 'unsel', 'v', 'selloc'];

const renderTool = (item: string, i: number) => {
  if (item[0] === '|') return <Grip key={i} $w={item.length > 1 ? Number(item.slice(1)) : 16} />;
  if (item === '/') return <Sep key={i} />;
  if (item === 'v') return <DropArrow key={i} />;
  if (item === '~v') return <DropArrow key={i} $off />;
  const off = item[0] === '~';
  const on = item[0] === '!';
  return (
    <ToolButton key={i} $off={off} $on={on}>
      {toolIcon(off || on ? item.slice(1) : item)}
    </ToolButton>
  );
};

const SIDE: [string, boolean][] = [
  ['vadd', false], ['raster', false], ['meshadd', false], ['comma', false], ['featheradd', false], ['virtualadd', false],
  ['pg', true], ['wms', true], ['wcs', false], ['wfs', true], ['vstar', true],
];

const BROWSER = [
  { d: 0, n: 'TELEDETECTION_2022', i: 'folderOpen', t: 'open' },
  { d: 1, n: 'DONNEES', i: 'folderOpen', t: 'open' },
  { d: 2, n: 'Raster (les images)', i: 'folderOpen', t: 'closed' },
  { d: 2, n: 'Vecteurs', i: 'folderOpen', t: 'open' },
  { d: 3, n: 'mdg_admbnda_adm0_bngrc_ocha_20181031', i: 'folder', t: 'closed' },
  { d: 3, n: 'mdg_admbnda_adm0_bngrc_ocha_20181031.zip', i: 'zip', t: 'closed' },
  { d: 3, n: 'mdg_admbnda_adm1_bngrc_ocha_20181031.zip', i: 'zip', t: 'closed' },
  { d: 3, n: 'mdg_admbnda_adm2_bngrc_ocha_20181031.zip', i: 'zip', t: 'closed' },
  { d: 3, n: 'mdg_admbnda_adm3_bngrc_ocha_20181031.zip', i: 'zip', t: 'open' },
  { d: 4, n: 'mdg_admbnda_adm3_BNGRC_OCHA_20181031.shp', i: 'shp', hi: true },
  { d: 3, n: 'mdg_admbnda_adm4_bngrc_ocha_20181031.zip', i: 'zip', t: 'closed' },
  { d: 1, n: 'PROGRAMMES', i: 'folder', t: 'closed' },
  { d: 1, n: 'TRAITEMENTS', i: 'folderOpen' },
  { d: 1, n: 'ZLesson', i: 'folder', t: 'closed' },
  { d: 0, n: 'test', i: 'folder', t: 'closed' },
  { d: 0, n: 'Video Recording', i: 'folder', t: 'closed' },
  { d: 0, n: 'vueis', i: 'folder', t: 'closed' },
];

const ALGOS = ['Analyse de réseau', 'Analyse de terrain raster', 'Analyse raster', 'Analyse vectorielle', 'Base de données', 'Cartographie', 'Création de vecteurs', "Création d'un raster", 'Géométrie vectorielle', 'Interpolation', 'Mesh', 'Outils fichiers', 'Outils généraux pour les couches', 'Outils généraux pour les vecteurs', 'Outils rasters', 'Points', 'Recouvrement de vecteur', 'Sélection dans un vecteur', 'Table vecteur', 'Tuiles vectorielles'];

/* ---------- the map: communes are generated, the coast is traced ---------- */

type Pt = [number, number];

const north: number[] = [897,50,912,75,915,95,935,115,945,150,975,170,990,230,1015,290,1025,380,1030,440,1050,480,1067,520,1055,570,1030,615,1010,605,990,565,965,545,950,550,970,590,980,650,975,700,960,740,935,790,930,860,915,920,905,990];
const south: number[] = [890,30,860,120,830,220,800,300,770,400,740,480,710,560,690,640,670,720,640,800,610,880,590,915,540,945,470,950,420,970,380,995,320,1003,290,985,240,965,200,955,165,925,150,880,115,835,108,730,125,705,105,650,70,620,55,540,50,500,65,465,90,440,85,405,130,395,145,330,190,275,228,210,215,190,222,150,195,90,190,40,170,0];
const northWest: number[] = [165,960,160,900,150,830,175,780,215,710,225,680,215,645,285,645,330,610,345,630,380,610,395,590,425,590,480,575,490,600,490,570,570,510,585,530,580,545,600,530,585,505,625,480,635,465,620,455,645,435,650,465,640,490,670,440,680,410,700,380,720,380,705,320,705,285,720,270,750,310,770,275,800,260,830,240,850,190,855,130,830,120,860,100,875,95,890,70];

const pairs = (list: number[], oy: number): Pt[] => {
  const out: Pt[] = [];
  for (let i = 0; i < list.length; i += 2) out.push([list[i] / 3 + 740, list[i + 1] / 3 + oy]);
  return out;
};

const rng = (seed: number) => () => {
  seed = (seed + 0x6d2b79f5) | 0;
  let t = Math.imul(seed ^ (seed >>> 15), 1 | seed);
  t = (t + Math.imul(t ^ (t >>> 7), 61 | t)) ^ t;
  return ((t ^ (t >>> 14)) >>> 0) / 4294967296;
};

const inside = (poly: Pt[], x: number, y: number) => {
  let hit = false;
  for (let i = 0, j = poly.length - 1; i < poly.length; j = i++) {
    const [xi, yi] = poly[i];
    const [xj, yj] = poly[j];
    if (yi > y !== yj > y && x < ((xj - xi) * (y - yi)) / (yj - yi) + xi) hit = !hit;
  }
  return hit;
};

// dense communes around the towns: x, y, spread, smallest spacing
const TOWNS = [
  [957, 502, 9, 1.7], [932, 547, 6, 2.2], [947, 577, 6, 2.4], [940, 619, 7, 2.2], [971, 660, 8, 2.6],
  [963, 560, 18, 4], [950, 460, 24, 5], [925, 600, 18, 6], [1070, 285, 6, 4], [1053, 302, 5, 3.5],
  [955, 700, 14, 4], [835, 770, 20, 6], [790, 720, 16, 7.5], [1000, 440, 30, 8], [1030, 240, 20, 9],
];

const spacing = (x: number, y: number) => {
  const east = y < 490 ? 1075 - (y - 290) * 0.2 : 1040 - (y - 490) * 0.36;
  let r = Math.max(5, Math.min(21, 5 + (east - x) * 0.1));
  for (const [cx, cy, s, m] of TOWNS) {
    const f = Math.exp(-((x - cx) ** 2 + (y - cy) ** 2) / (2 * s * s));
    r = r * (1 - f) + m * f;
  }
  return r;
};

const clipCell = (poly: Pt[], a: Pt, b: Pt): Pt[] => {
  const mx = (a[0] + b[0]) / 2;
  const my = (a[1] + b[1]) / 2;
  const nx = b[0] - a[0];
  const ny = b[1] - a[1];
  const out: Pt[] = [];
  for (let i = 0; i < poly.length; i++) {
    const p = poly[i];
    const q = poly[(i + 1) % poly.length];
    const sp = (p[0] - mx) * nx + (p[1] - my) * ny;
    const sq = (q[0] - mx) * nx + (q[1] - my) * ny;
    if (sp <= 0) out.push(p);
    if (sp <= 0 !== sq <= 0) {
      const t = sp / (sp - sq);
      out.push([p[0] + (q[0] - p[0]) * t, p[1] + (q[1] - p[1]) * t]);
    }
  }
  return out;
};

const buildMap = () => {
  const outline = [...pairs(north, 160), ...pairs(south, 480), ...pairs(northWest, 160)];
  const rand = rng(7);
  const coast: Pt[] = [];
  outline.forEach((p, i) => {
    const q = outline[(i + 1) % outline.length];
    const steps = Math.max(1, Math.round(Math.hypot(q[0] - p[0], q[1] - p[1]) / 5));
    for (let s = 0; s < steps; s++) {
      const t = s / steps;
      coast.push([p[0] + (q[0] - p[0]) * t + (rand() - 0.5) * 1.8, p[1] + (q[1] - p[1]) * t + (rand() - 0.5) * 1.8]);
    }
  });

  const sites: Pt[] = [];
  const tryAdd = (x: number, y: number) => {
    if (!inside(outline, x, y)) return;
    // spacing varies from one commune to its neighbour, that breaks the honeycomb look
    const r = spacing(x, y) * (0.65 + rand() * 0.7);
    const r2 = r * r;
    for (const s of sites) if ((s[0] - x) ** 2 + (s[1] - y) ** 2 < r2) return;
    sites.push([x, y]);
  };
  for (const [cx, cy, s] of TOWNS) {
    for (let i = 0; i < 650; i++) {
      const a = rand() * Math.PI * 2;
      const d = Math.sqrt(-2 * Math.log(1 - rand())) * s;
      tryAdd(cx + Math.cos(a) * d, cy + Math.sin(a) * d);
    }
  }
  for (let i = 0; i < 16000; i++) tryAdd(750 + rand() * 350, 175 + rand() * 645);

  const seen = new Set<string>();
  const parts: string[] = [];
  const fmt = (n: number) => n.toFixed(1);
  sites.forEach(a => {
    const near = sites
      .filter(b => b !== a && Math.abs(b[0] - a[0]) < 60 && Math.abs(b[1] - a[1]) < 60)
      .map(b => ({ b, d: (b[0] - a[0]) ** 2 + (b[1] - a[1]) ** 2 }))
      .sort((u, v) => u.d - v.d);
    let cell: Pt[] = [[a[0] - 30, a[1] - 30], [a[0] + 30, a[1] - 30], [a[0] + 30, a[1] + 30], [a[0] - 30, a[1] + 30]];
    for (const { b, d } of near) {
      let far = 0;
      for (const p of cell) far = Math.max(far, (p[0] - a[0]) ** 2 + (p[1] - a[1]) ** 2);
      if (d > 4 * far) break;
      cell = clipCell(cell, a, b);
    }
    cell.forEach((p, i) => {
      const q = cell[(i + 1) % cell.length];
      const k1 = `${fmt(p[0])},${fmt(p[1])}`;
      const k2 = `${fmt(q[0])},${fmt(q[1])}`;
      const key = k1 < k2 ? `${k1}|${k2}` : `${k2}|${k1}`;
      if (seen.has(key)) return;
      seen.add(key);
      const len = Math.hypot(q[0] - p[0], q[1] - p[1]);
      if (len < 0.2) return;
      const pieces = Math.min(6, Math.ceil(len / 4));
      const nx = -(q[1] - p[1]) / len;
      const ny = (q[0] - p[0]) / len;
      const amp = Math.min(len * 0.22, 3.2);
      let d = `M${k1}`;
      for (let s = 1; s < pieces; s++) {
        const t = s / pieces;
        const o = (rand() - 0.5) * amp * 2;
        d += `L${fmt(p[0] + (q[0] - p[0]) * t + nx * o)},${fmt(p[1] + (q[1] - p[1]) * t + ny * o)}`;
      }
      parts.push(`${d}L${k2}`);
    });
  });

  return {
    coast: `M${coast.map(p => `${fmt(p[0])},${fmt(p[1])}`).join('L')}Z`,
    lines: parts.join(''),
  };
};

const PINK = '#e76d8b';
const LINE = '#3c3538';

const Madagascar = () => {
  const map = useMemo(buildMap, []);
  return (
    <MapSvg width={737} height={672} viewBox="557 160 737 672">
      <defs>
        <clipPath id="coast">
          <path d={map.coast} />
        </clipPath>
      </defs>
      <path d={map.coast} fill={PINK} stroke={LINE} strokeWidth="1" />
      <path d={map.lines} clipPath="url(#coast)" fill="none" stroke={LINE} strokeWidth="1" />
      <g fill={PINK} stroke={LINE} strokeWidth="0.9">
        <path d="M1065 418l8-19 1.500 1-7 18z" />
        <path d="M988 240l4-3 4 1 2 7 1 3-4-1-6-3z" />
        <path d="M1007 220l3-3 2 4-3 2z" />
        <path d="M1020 195l3-1 1 3-3 1z" />
      </g>
      <g fill={LINE}>
        <circle cx="1012" cy="198" r="0.9" /><circle cx="971" cy="270" r="0.9" /><circle cx="970" cy="276" r="0.9" /><circle cx="962" cy="298" r="0.9" /><circle cx="792" cy="484" r="0.8" /><circle cx="756" cy="650" r="0.9" /><circle cx="755" cy="653" r="0.9" />
      </g>
      <path d="M940 641l3 1 3-1 2 3 3 1-2 3-1 3-4-1-3 1-2-3 1-3z" fill="#ffff0a" stroke="#ecec10" strokeWidth="0.5" />
    </MapSvg>
  );
};

/* ---------- small shared parts ---------- */

const DockButtons = () => (
  <>
    <DockButton viewBox="0 0 12 12">
      <rect x="0.5" y="0.5" width="11" height="11" rx="2" fill="#f4f4f4" stroke="#777" />
      <path d="M5 2.500h4.500V7M2.500 5h4.500v4.500H2.500z" fill="none" stroke="#555" />
    </DockButton>
    <DockButton viewBox="0 0 12 12">
      <rect x="0.5" y="0.5" width="11" height="11" rx="2" fill="#f4f4f4" stroke="#777" />
      <path d="M3 3l6 6M9 3l-6 6" stroke="#444" strokeWidth="1.600" />
    </DockButton>
  </>
);

const PanelIcon = ({ name }: { name: string }) => {
  if (name === 'refresh') return <RefreshCw size={18} strokeWidth={3} color="#5a97d2" />;
  return <Glyph name={name} size={18} />;
};

const BrowserTree = () => (
  <TreeList>
    {BROWSER.map(r => (
      <Row key={r.n} $pad={63 + r.d * 20} $hi={r.hi}>
        <Twist $state={r.t as 'open' | 'closed' | undefined} />
        <RowIcon>
          <Glyph name={r.i} size={16} box={16} />
        </RowIcon>
        {r.n}
      </Row>
    ))}
  </TreeList>
);

const TreeRow = ({ label, icon }: { label: string; icon: React.ReactNode }) => (
  <Row $pad={2}>
    <Twist $state="closed" />
    <RowIcon>{icon}</RowIcon>
    {label}
  </Row>
);

export default function App() {
  return (
    <Page>
      <GlobalStyle />
      <TitleBar>
        <Glyph name="qgis" size={16} />
        <TitleText>*Projet sans titre — QGIS</TitleText>
        <WinButton>
          <svg width="11" height="11"><path d="M0 5.500h11" stroke="#111" /></svg>
        </WinButton>
        <WinButton>
          <svg width="11" height="11"><path d="M.5 2.500h8v8h-8zM2.500 2.500v-2h8v8h-2" fill="none" stroke="#111" /></svg>
        </WinButton>
        <WinButton>
          <svg width="11" height="11"><path d="M.5.500l10 10M10.500.500l-10 10" stroke="#111" /></svg>
        </WinButton>
      </TitleBar>
      <MenuBar>
        <MenuItem>Pro<u>j</u>et</MenuItem>
        <MenuItem><u>É</u>diter</MenuItem>
        <MenuItem>V<u>u</u>e</MenuItem>
        <MenuItem><u>C</u>ouche</MenuItem>
        <MenuItem><u>P</u>références</MenuItem>
        <MenuItem>E<u>x</u>tensions</MenuItem>
        <MenuItem><u>V</u>ecteur</MenuItem>
        <MenuItem><u>R</u>aster</MenuItem>
        <MenuItem><u>B</u>ase de données</MenuItem>
        <MenuItem><u>I</u>nternet</MenuItem>
        <MenuItem><u>M</u>aillage</MenuItem>
        <MenuItem><u>T</u>raitement</MenuItem>
        <MenuItem><u>A</u>ide</MenuItem>
      </MenuBar>
      <ToolRow $h={40}>{ROW1.map(renderTool)}</ToolRow>
      <ToolRow $h={39}>{ROW2.map(renderTool)}</ToolRow>
      <ToolRow $h={38} $top={2}>{ROW3.map(renderTool)}</ToolRow>
      <Body>
        <SideBar>
          <SideGrip />
          {SIDE.map(([name, arrow]) => (
            <SideItem key={name}>
              <Glyph name={name} size={26} />
              {arrow && <DropArrow $w={9} />}
            </SideItem>
          ))}
        </SideBar>
        <LeftDock>
          <Panel $h={368}>
            <PanelHead>
              <PanelTitle>Parcourir</PanelTitle>
              <DockButtons />
            </PanelHead>
            <PanelBar>
              {['selfeat', 'refresh', 'filter', 'collapse', 'info'].map(n => (
                <PanelTool key={n}><PanelIcon name={n} /></PanelTool>
              ))}
            </PanelBar>
            <TreeBox>
              <BrowserTree />
              <VBar>
                <ScrollBtn $size={14}><MiniArrow $dir="up" /></ScrollBtn>
                <ScrollSpace $size={109} />
                <ScrollSpace $size={57} $thumb />
                <ScrollSpace />
                <ScrollBtn $size={14}><MiniArrow $dir="down" /></ScrollBtn>
              </VBar>
              <HBar>
                <ScrollBtn $size={14} $horizontal><MiniArrow $dir="left" /></ScrollBtn>
                <ScrollSpace $size={363} $thumb $horizontal />
                <ScrollSpace />
                <ScrollBtn $size={14} $horizontal><MiniArrow $dir="right" /></ScrollBtn>
              </HBar>
              <Corner />
            </TreeBox>
          </Panel>
          <Splitter />
          <Panel>
            <PanelHead>
              <PanelTitle>Couches</PanelTitle>
              <DockButtons />
            </PanelHead>
            <PanelBar>
              {['brush', 'addgroup', 'eye', 'filter', 'epsilon'].map(n => (
                <PanelTool key={n}><PanelIcon name={n} /></PanelTool>
              ))}
              <DropArrow $w={12.5} />
              {['expand', 'collapse', 'removesel'].map(n => (
                <PanelTool key={n}><PanelIcon name={n} /></PanelTool>
              ))}
            </PanelBar>
            <PlainBox>
              <LayerRow>
                <LayerCheck>
                  <svg width="11" height="11"><path d="M2 5.500l2.500 3.500L9 1.500" fill="none" stroke="#000" strokeWidth="2" /></svg>
                </LayerCheck>
                <LayerSwatch />
                mdg_admbnda_adm3_BNGRC_OCHA_20181031
              </LayerRow>
            </PlainBox>
          </Panel>
        </LeftDock>
        <Canvas>
          <Madagascar />
        </Canvas>
        <RightDock>
          <Panel>
            <PanelHead>
              <PanelTitle>Boîte à outils de traitements</PanelTitle>
              <DockButtons />
            </PanelHead>
            <PanelBar $pad={3}>
              {['procalgo', 'procpy', 'clockLight', 'procdoc'].map(n => (
                <PanelTool key={n}><PanelIcon name={n} /></PanelTool>
              ))}
              <PanelSep />
              <PanelTool><PanelIcon name="procedit" /></PanelTool>
              <PanelSep />
              <PanelTool><PanelIcon name="wrench" /></PanelTool>
            </PanelBar>
            <SearchBox>
              <Search size={14} color="#777" />
              Rechercher...
            </SearchBox>
            <PlainBox $open>
              <TreeRow label="Utilisé récemment" icon={<Glyph name="clockLight" size={17} />} />
              {ALGOS.map(a => (
                <TreeRow key={a} label={a} icon={<Glyph name="qgis" size={16} />} />
              ))}
              <TreeRow label="GDAL" icon={<Glyph name="gdal" size={17} />} />
              <TreeRow label="GRASS" icon={<Glyph name="grass" size={17} />} />
              <TreeRow label="SAGA" icon={<Glyph name="saga" size={17} />} />
            </PlainBox>
          </Panel>
        </RightDock>
      </Body>
    </Page>
  );
}
